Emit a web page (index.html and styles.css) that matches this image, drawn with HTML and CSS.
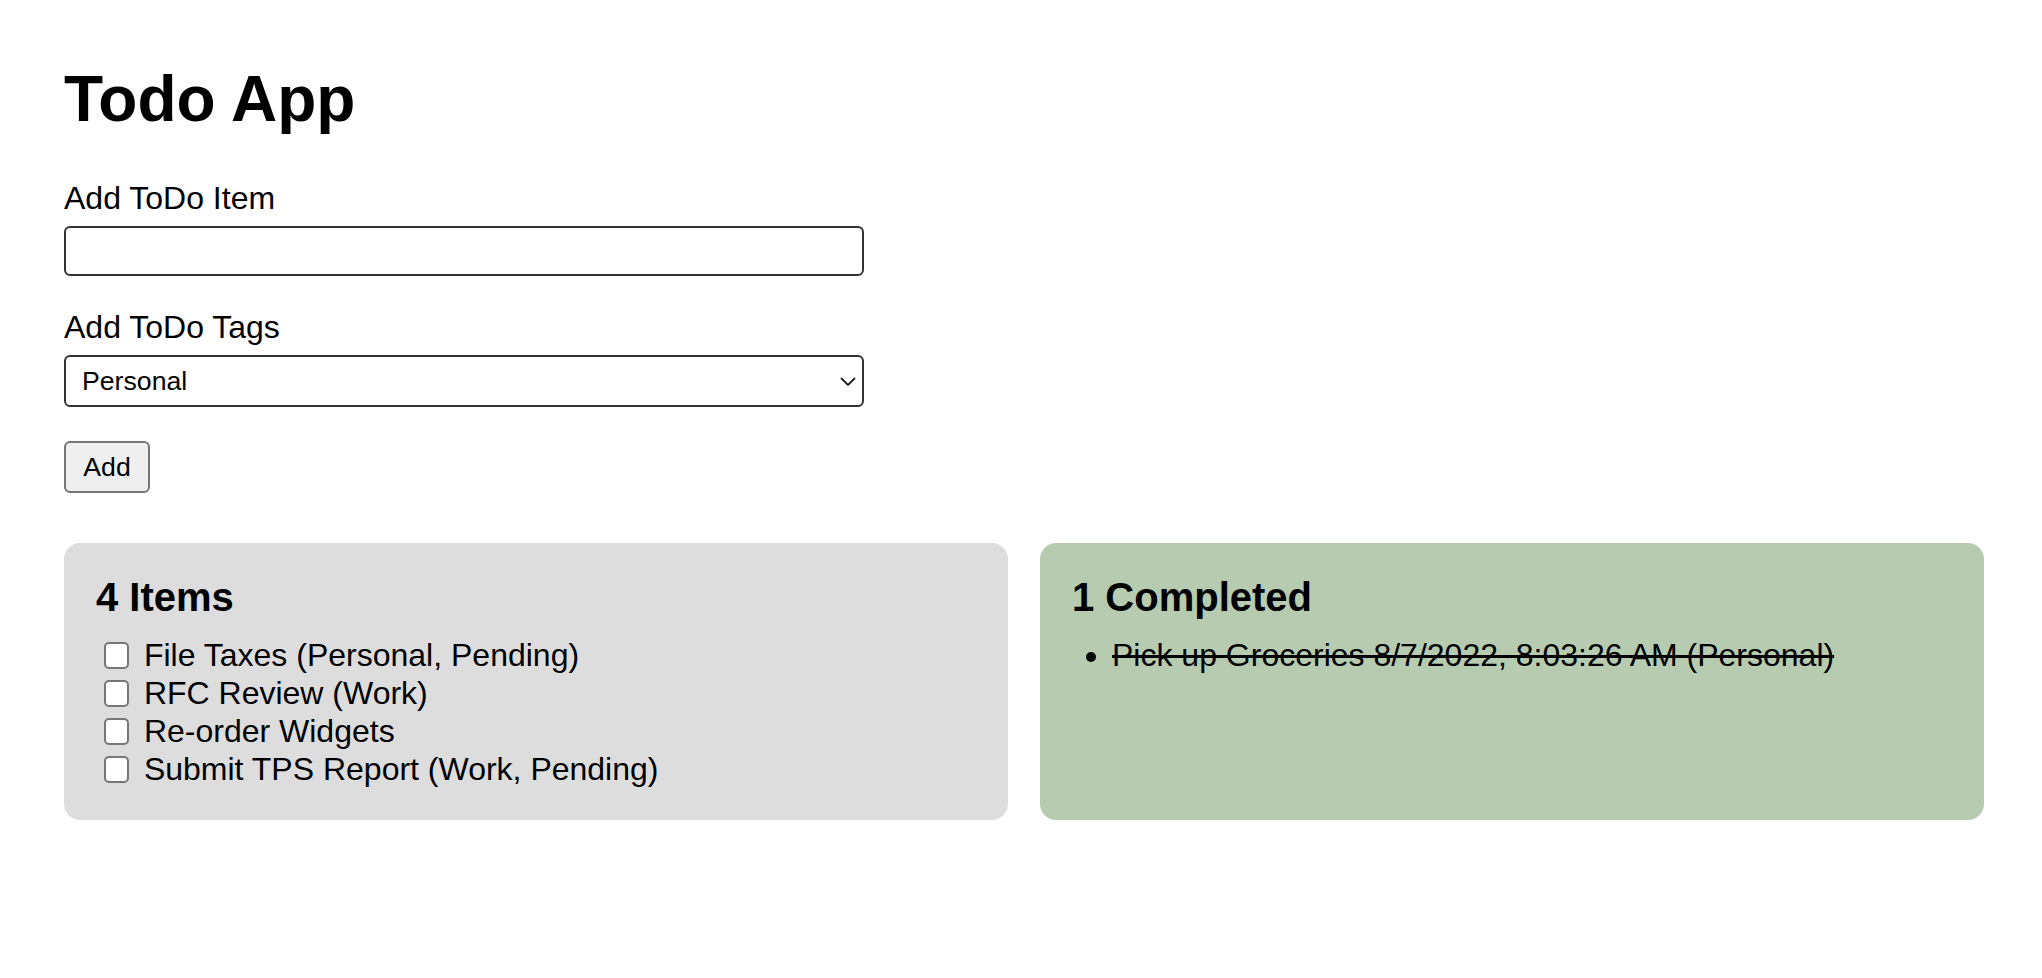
FILE: index.html
```html
<!DOCTYPE html>
<html lang="en">
<head>
<meta charset="utf-8">
<title>Todo App</title>
<link rel="stylesheet" href="styles.css">
</head>
<body>
<main class="app">
  <h1 class="title">Todo App</h1>
  <form class="todo-form">
    <div class="field">
      <label class="field-label" for="item">Add ToDo Item</label>
      <input class="text-input" id="item" type="text">
    </div>
    <div class="field">
      <label class="field-label" for="tags">Add ToDo Tags</label>
      <div class="select-wrap">
        <select class="select" id="tags">
          <option>Personal</option>
          <option>Work</option>
          <option>Pending</option>
        </select>
        <svg class="chevron" width="16" height="9" viewBox="0 0 16 9"><path d="M1 1 L8 8 L15 1" fill="none" stroke="#222" stroke-width="1.8"/></svg>
      </div>
    </div>
    <button class="add-btn" type="button">Add</button>
  </form>
  <section class="panels">
    <div class="panel panel-items">
      <h2 class="panel-title">4 Items</h2>
      <ul class="check-list">
        <li><label class="check-row"><input class="check" type="checkbox"> File Taxes (Personal, Pending)</label></li>
        <li><label class="check-row"><input class="check" type="checkbox"> RFC Review (Work)</label></li>
        <li><label class="check-row"><input class="check" type="checkbox"> Re-order Widgets</label></li>
        <li><label class="check-row"><input class="check" type="checkbox"> Submit TPS Report (Work, Pending)</label></li>
      </ul>
    </div>
    <div class="panel panel-done">
      <h2 class="panel-title">1 Completed</h2>
      <ul class="done-list">
        <li>Pick up Groceries 8/7/2022, 8:03:26 AM (Personal)</li>
      </ul>
    </div>
  </section>
</main>
</body>
</html>
```
FILE: styles.css
```css
html, body {
  margin: 0;
  padding: 0;
  background: #fff;
}
body {
  font-family: "Liberation Sans", Arial, Helvetica, sans-serif;
  font-size: 32px;
  color: #000;
}
.app {
  width: 1920px;
  padding: 62px 0 40px 64px;
}
.title {
  margin: 0 0 44px;
  font-size: 64px;
  font-weight: bold;
  line-height: 74px;
}
.todo-form {
  display: flex;
  flex-direction: column;
  align-items: flex-start;
}
.field {
  display: flex;
  flex-direction: column;
  gap: 9px;
  margin-bottom: 33px;
}
.field + .field {
  margin-bottom: 34px;
}
.field-label {
  line-height: 37px;
}
.text-input {
  box-sizing: border-box;
  width: 800px;
  height: 50px;
  margin: 0;
  border: 2px solid #333;
  border-radius: 6px;
  background: #fff;
  font: inherit;
  font-size: 26.67px;
  padding: 0 14px;
}
.select-wrap {
  position: relative;
  width: 800px;
  height: 52px;
}
.select {
  appearance: none;
  -webkit-appearance: none;
  box-sizing: border-box;
  width: 800px;
  height: 52px;
  margin: 0;
  border: 2px solid #333;
  border-radius: 6px;
  background: #fff;
  font-family: inherit;
  font-size: 26.67px;
  color: #000;
  padding: 0 14px 0 16px;
}
.chevron {
  position: absolute;
  right: 8px;
  top: 22px;
  pointer-events: none;
}
.add-btn {
  box-sizing: border-box;
  width: 86px;
  height: 52px;
  margin: 0 0 50px;
  padding: 0;
  border: 2px solid #767676;
  border-radius: 6px;
  background: #efefef;
  font-family: inherit;
  font-size: 26.67px;
  color: #000;
}
.panels {
  display: grid;
  grid-template-columns: 1fr 1fr;
  gap: 32px;
}
.panel {
  box-sizing: border-box;
  min-height: 277px;
  padding: 31px 32px 32px;
  border-radius: 16px;
}
.panel-items {
  background: #dddddd;
}
.panel-done {
  background: #b6cbb0;
}
.panel-title {
  margin: 0 0 16px;
  font-size: 40px;
  font-weight: bold;
  line-height: 46px;
}
.check-list {
  list-style: none;
  margin: 0;
  padding: 0;
}
.check-list li {
  line-height: 38px;
}
.check-row {
  display: flex;
  align-items: center;
  white-space: pre;
}
.check {
  appearance: none;
  -webkit-appearance: none;
  box-sizing: border-box;
  width: 25px;
  height: 27px;
  margin: 0 6px 0 8px;
  border: 2px solid #767676;
  border-radius: 5px;
  background: #fff;
}
.done-list {
  margin: 0;
  padding-left: 40px;
}
.done-list li {
  line-height: 38px;
  text-decoration: line-through;
}
```
